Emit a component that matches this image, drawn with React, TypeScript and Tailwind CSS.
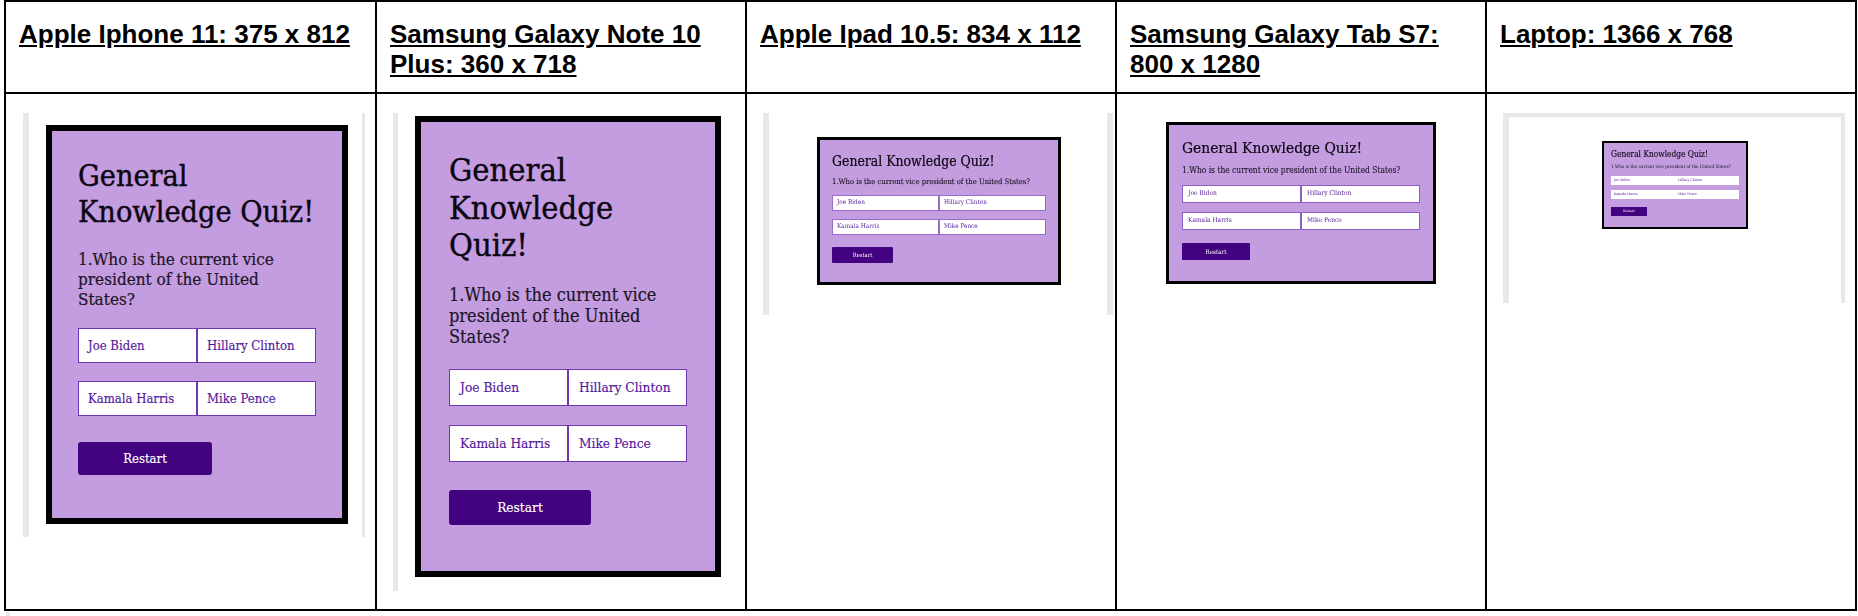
import React from 'react';

type CardStyle = {
  card: string;
  title: string;
  question: string;
  options: string;
  option: string;
  button: string;
};

const answers = ['Joe Biden', 'Hillary Clinton', 'Kamala Harris', 'Mike Pence'];

const QuizCard: React.FC<{ s: CardStyle }> = ({ s }) => (
  <div className={`shrink-0 border-black bg-[#c39de0] font-['DejaVu_Serif_Condensed','DejaVu_Serif',serif] ${s.card}`}>
    <h1 className={`text-[#0c0612] ${s.title}`}>General Knowledge Quiz!</h1>
    <p className={`text-[#1d1424] ${s.question}`}>1.Who is the current vice president of the United States?</p>
    <div className={`grid grid-cols-2 ${s.options}`}>
      {answers.map((answer) => (
        <div key={answer} className={`flex items-center bg-white text-[#54189c] ${s.option}`}>
          {answer}
        </div>
      ))}
    </div>
    <div className={`flex items-center justify-center bg-[#430380] text-white ${s.button}`}>Restart</div>
  </div>
);

const phone: CardStyle = {
  card: 'w-[302px] h-[399px] border-[6px] px-[26px] pt-[27px]',
  title: 'text-[30.3px] leading-[36px] [-webkit-text-stroke:0.4px]',
  question: 'mt-[19px] text-[17px] leading-[20px] [-webkit-text-stroke:0.2px]',
  options: 'mt-[19px] gap-y-[18px]',
  option: 'h-[35px] pl-[9px] text-[13px] border border-[#7036b0] [-webkit-text-stroke:0.15px]',
  button: 'mt-[26px] w-[134px] h-[33px] text-[13px] rounded-[3px] [-webkit-text-stroke:0.15px]',
};

const note: CardStyle = {
  card: 'w-[306px] h-[461px] border-[6px] px-[28px] pt-[30px]',
  title: 'text-[32.4px] leading-[37.5px] [-webkit-text-stroke:0.4px]',
  question: 'mt-[19px] text-[18px] leading-[21px] [-webkit-text-stroke:0.2px]',
  options: 'mt-[22px] gap-y-[19px]',
  option: 'h-[37px] pl-[10px] text-[13.6px] border border-[#7036b0] [-webkit-text-stroke:0.15px]',
  button: 'mt-[28px] w-[142px] h-[35px] text-[13.6px] rounded-[3px] [-webkit-text-stroke:0.15px]',
};

const ipad: CardStyle = {
  card: 'w-[244px] h-[148px] border-[3px] px-[12px] pt-[12px] blur-[0.4px]',
  title: 'text-[13.9px] leading-[18px] [-webkit-text-stroke:0.2px]',
  question: 'mt-[7px] text-[7.6px] leading-[9px] [-webkit-text-stroke:0.1px]',
  options: 'mt-[9px] gap-y-[8px]',
  option: 'h-[16px] pl-[4px] text-[6.4px] border border-[#9a6cc8]',
  button: 'mt-[12px] w-[61px] h-[16px] text-[5.8px] rounded-[1px]',
};

const tab: CardStyle = {
  card: 'w-[270px] h-[162px] border-[3px] px-[13px] pt-[13px] blur-[0.3px]',
  title: 'text-[15.4px] leading-[20px] [-webkit-text-stroke:0.2px]',
  question: 'mt-[7px] text-[8.4px] leading-[10px] [-webkit-text-stroke:0.1px]',
  options: 'mt-[10px] gap-y-[9px]',
  option: 'h-[18px] pl-[5px] text-[6.6px] border border-[#8e5cc4]',
  button: 'mt-[13px] w-[68px] h-[17px] text-[6.2px] rounded-[1px]',
};

const laptop: CardStyle = {
  card: 'w-[146px] h-[88px] border-[2px] border-[#2a2430] px-[7px] pt-[6px] blur-[0.4px]',
  title: 'text-[8.3px] leading-[10px] [-webkit-text-stroke:0.1px]',
  question: 'mt-[5px] text-[4.6px] leading-[6px]',
  options: 'mt-[6px] gap-y-[5px]',
  option: 'h-[9px] pl-[3px] text-[3.6px]',
  button: 'mt-[8px] w-[36px] h-[9px] text-[3.4px]',
};

const headings = [
  'Apple Iphone 11: 375 x 812',
  'Samsung Galaxy Note 10 Plus: 360 x 718',
  'Apple Ipad 10.5: 834 x 112',
  'Samsung Galaxy Tab S7: 800 x 1280',
  'Laptop: 1366 x 768',
];

export default function App() {
  return (
    <div className="h-[616px] w-[1858px] overflow-hidden bg-white font-['Liberation_Sans',Arial,sans-serif]">
      <div className="ml-[4px] grid w-[1853px] grid-cols-[371px_370px_370px_370px_370px] grid-rows-[92px_517px] border-t-2 border-l-2 border-black">
        {headings.map((heading) => (
          <div key={heading} className="border-r-2 border-b-2 border-black pl-[13px] pr-[10px] pt-[17px]">
            <h2 className="text-[26px] leading-[30px] font-bold text-black underline">{heading}</h2>
          </div>
        ))}

        <div className="border-r-2 border-b-2 border-black pl-[17px] pt-[19px]">
          <div className="flex h-[424px] w-[342px] border-r-[3px] border-l-[6px] border-[#e8e8e8] pl-[17px] pt-[12px]">
            <QuizCard s={phone} />
          </div>
        </div>

        <div className="border-r-2 border-b-2 border-black pl-[16px] pt-[19px]">
          <div className="flex h-[478px] w-[330px] border-l-[5px] border-[#e8e8e8] pl-[17px] pt-[3px]">
            <QuizCard s={note} />
          </div>
        </div>

        <div className="border-r-2 border-b-2 border-black pl-[16px] pt-[19px]">
          <div className="flex h-[202px] w-[350px] border-x-[6px] border-[#e8e8e8] pl-[48px] pt-[24px]">
            <QuizCard s={ipad} />
          </div>
        </div>

        <div className="border-r-2 border-b-2 border-black pl-[49px] pt-[28px]">
          <QuizCard s={tab} />
        </div>

        <div className="border-r-2 border-b-2 border-black pl-[16px] pt-[19px]">
          <div className="flex h-[190px] w-[342px] border-t-[4px] border-r-[4px] border-l-[6px] border-[#e8e8e8] pl-[93px] pt-[24px]">
            <QuizCard s={laptop} />
          </div>
        </div>
      </div>
      <div className="ml-[6px] mt-[1px] h-[5px] w-[4px] bg-[#e8e8e8]" />
    </div>
  );
}
